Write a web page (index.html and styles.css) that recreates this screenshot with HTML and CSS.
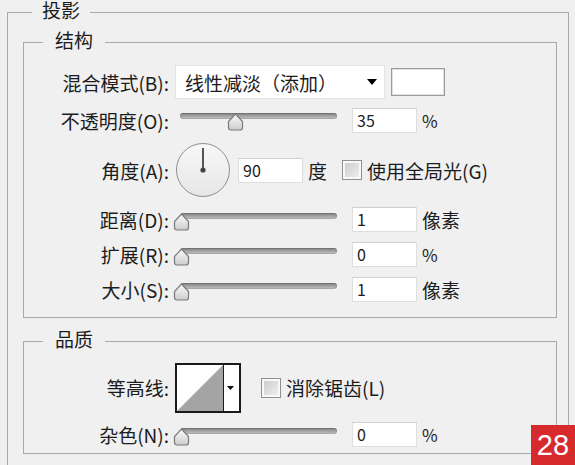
FILE: index.html
```html
<!DOCTYPE html>
<html lang="zh-CN">
<head>
    <meta charset="UTF-8">
    <title>图层样式 - 投影</title>
    <link rel="stylesheet" href="styles.css">
</head>
<body>
    <!-- shared gradients and the slider thumb shape -->
    <svg class="defs" width="0" height="0" aria-hidden="true">
        <defs>
            <linearGradient id="thumbFill" x1="0" y1="0" x2="0" y2="1">
                <stop offset="0" stop-color="#fbfbfb"/>
                <stop offset="1" stop-color="#cdcdcd"/>
            </linearGradient>
            <linearGradient id="dialFill" x1="0" y1="0" x2="0" y2="1">
                <stop offset="0" stop-color="#f8f8f8"/>
                <stop offset="1" stop-color="#e6e6e6"/>
            </linearGradient>
        </defs>
        <symbol id="thumb" viewBox="0 0 17 18">
            <path d="M8.5 1.2 L15.5 8.5 V14.5 Q15.5 17 13 17 H4 Q1.5 17 1.5 14.5 V8.5 Z"
                  fill="url(#thumbFill)" stroke="#7a7a7a" stroke-width="1.2" stroke-linejoin="round"/>
        </symbol>
    </svg>

    <fieldset class="group outer">
        <legend>投影</legend>

        <!-- 结构 -->
        <fieldset class="group section structure">
            <legend>结构</legend>
            <div class="rows">
                <div class="row row-blend">
                    <label class="field-label">混合模式(B):</label>
                    <div class="select">
                        <span>线性减淡（添加）</span>
                        <svg class="caret" width="10" height="6" viewBox="0 0 10 6"><path d="M0 0h10L5 6z"/></svg>
                    </div>
                    <span class="swatch"></span>
                </div>

                <div class="row row-opacity">
                    <label class="field-label">不透明度(O):</label>
                    <div class="slider">
                        <span class="track"></span>
                        <svg class="thumb" style="left: 54px"><use href="#thumb"/></svg>
                    </div>
                    <span class="num">35</span>
                    <span class="unit unit-pct">%</span>
                </div>

                <div class="row row-angle">
                    <label class="field-label">角度(A):</label>
                    <svg class="dial" width="56" height="56" viewBox="0 0 56 56">
                        <circle cx="28" cy="28" r="26.5" fill="url(#dialFill)" stroke="#8e8e8e"/>
                        <line x1="28" y1="28" x2="28" y2="6" stroke="#555" stroke-width="2"/>
                        <circle cx="28" cy="28" r="2.6" fill="#444"/>
                    </svg>
                    <span class="num num-angle">90</span>
                    <span class="unit">度</span>
                    <span class="check check-global"></span>
                    <span class="check-label">使用全局光(G)</span>
                </div>

                <div class="row">
                    <label class="field-label">距离(D):</label>
                    <div class="slider">
                        <span class="track"></span>
                        <svg class="thumb" style="left: 0px"><use href="#thumb"/></svg>
                    </div>
                    <span class="num">1</span>
                    <span class="unit">像素</span>
                </div>

                <div class="row">
                    <label class="field-label">扩展(R):</label>
                    <div class="slider">
                        <span class="track"></span>
                        <svg class="thumb" style="left: 0px"><use href="#thumb"/></svg>
                    </div>
                    <span class="num">0</span>
                    <span class="unit unit-pct">%</span>
                </div>

                <div class="row">
                    <label class="field-label">大小(S):</label>
                    <div class="slider">
                        <span class="track"></span>
                        <svg class="thumb" style="left: 0px"><use href="#thumb"/></svg>
                    </div>
                    <span class="num">1</span>
                    <span class="unit">像素</span>
                </div>
            </div>
        </fieldset>

        <!-- 品质 -->
        <fieldset class="group section quality">
            <legend>品质</legend>
            <div class="rows">
                <div class="row row-contour">
                    <label class="field-label">等高线:</label>
                    <svg class="contour" width="66" height="50" viewBox="0 0 66 50">
                        <rect x="1" y="1" width="64" height="48" fill="#fff" stroke="#1a1a1a" stroke-width="2"/>
                        <polygon points="2,48 48,2 48,48" fill="#a4a4a4"/>
                        <line x1="48.5" y1="1" x2="48.5" y2="49" stroke="#1a1a1a"/>
                        <path d="M52 23h7l-3.5 4z" fill="#111"/>
                    </svg>
                    <span class="check check-smooth"></span>
                    <span class="check-label">消除锯齿(L)</span>
                </div>

                <div class="row">
                    <label class="field-label">杂色(N):</label>
                    <div class="slider">
                        <span class="track"></span>
                        <svg class="thumb" style="left: 0px"><use href="#thumb"/></svg>
                    </div>
                    <span class="num">0</span>
                    <span class="unit unit-pct">%</span>
                </div>
            </div>
        </fieldset>
    </fieldset>

    <div class="badge">28</div>
</body>
</html>
```

FILE: styles.css
```css
html, body {
    height: 100%;
    overflow: hidden;
}

body {
    margin: 0;
    padding: 2px 6px 0 7px;
    box-sizing: border-box;
    background: #f0f0f0;
    font-family: "Noto Sans CJK SC", "Microsoft YaHei", sans-serif;
    font-size: 19px;
    color: #1c1c1c;
    position: relative;
}

.defs {
    position: absolute;
    width: 0;
    height: 0;
}

/* group boxes */
.group {
    margin: 0;
    min-width: 0;
    border: 1px solid #a9a9a9;
}

.group > legend {
    line-height: 15px;
    padding: 0 10px 5px;
}

.outer {
    height: 540px;
    padding: 10px 11px 0 15px;
}

.outer > legend {
    margin-left: 9px;
}

.section {
    padding: 0;
}

.section > legend {
    margin-left: 19px;
    padding: 0 12px 5px;
}

.rows {
    display: flex;
    flex-direction: column;
    gap: 10px;
}

.structure .rows {
    padding: 13px 0 15px;
}

.quality {
    margin-top: 13px;
}

.quality .rows {
    padding: 12px 0 6px;
}

/* rows */
.row {
    display: flex;
    align-items: center;
    height: 25px;
}

.row-blend {
    height: 34px;
    margin-bottom: -2px;
}

.row-opacity {
    height: 26px;
}

.row-angle {
    height: 54px;
}

.row-contour {
    height: 49px;
}

.field-label {
    width: 145px;
    flex-shrink: 0;
    margin-right: 6px;
    text-align: right;
    white-space: nowrap;
}

/* blend mode dropdown */
.select {
    width: 210px;
    height: 34px;
    box-sizing: border-box;
    display: flex;
    align-items: center;
    padding-left: 9px;
    background: #fff;
    border: 1px solid #e4e4e4;
}

.caret {
    margin-left: auto;
    margin-right: 7px;
}

.swatch {
    width: 54px;
    height: 28px;
    margin-left: 6px;
    box-sizing: border-box;
    background: #fff;
    border: 1px solid #9c9c9c;
    box-shadow: inset 0 0 0 1px #e0e0e0;
}

/* sliders */
.slider {
    position: relative;
    width: 165px;
    height: 18px;
    flex-shrink: 0;
    margin-left: -2px;
    margin-top: 4px;
}

.track {
    display: block;
    height: 6px;
    margin: 0 1px 0 7px;
    border-radius: 3px;
    background: linear-gradient(#7c7c7c, #a6a6a6 55%, #c6c6c6);
    box-shadow: inset 0 0 0 1px rgba(0, 0, 0, 0.12);
}

.thumb {
    position: absolute;
    top: 0;
    width: 17px;
    height: 18px;
}

/* number fields */
.num {
    width: 65px;
    height: 25px;
    box-sizing: border-box;
    margin-left: 14px;
    padding-left: 4px;
    background: #fff;
    border: 1px solid #dedede;
    border-top-color: #cfcfcf;
    font-size: 16px;
    line-height: 23px;
}

.num-angle {
    margin-left: 7px;
}

.unit {
    margin-left: 5px;
}

.unit-pct {
    font-size: 17px;
}

/* angle dial */
.dial {
    flex-shrink: 0;
}

/* checkboxes */
.check {
    width: 20px;
    height: 20px;
    box-sizing: border-box;
    border: 1px solid #8f8f8f;
    background: linear-gradient(135deg, #c8c8c8, #f2f2f2);
    box-shadow: inset 0 0 0 2px #f8f8f8;
}

.check-global {
    margin-left: 15px;
}

.check-smooth {
    margin-left: 20px;
}

.check-label {
    margin-left: 5px;
    white-space: nowrap;
}

.contour {
    flex-shrink: 0;
}

/* page number tag */
.badge {
    position: absolute;
    right: 0;
    bottom: 0;
    width: 44px;
    height: 40px;
    background: #d62a2c;
    color: #fff;
    font-family: "Liberation Sans", Arial, sans-serif;
    font-size: 29px;
    line-height: 40px;
    text-align: center;
}
```
